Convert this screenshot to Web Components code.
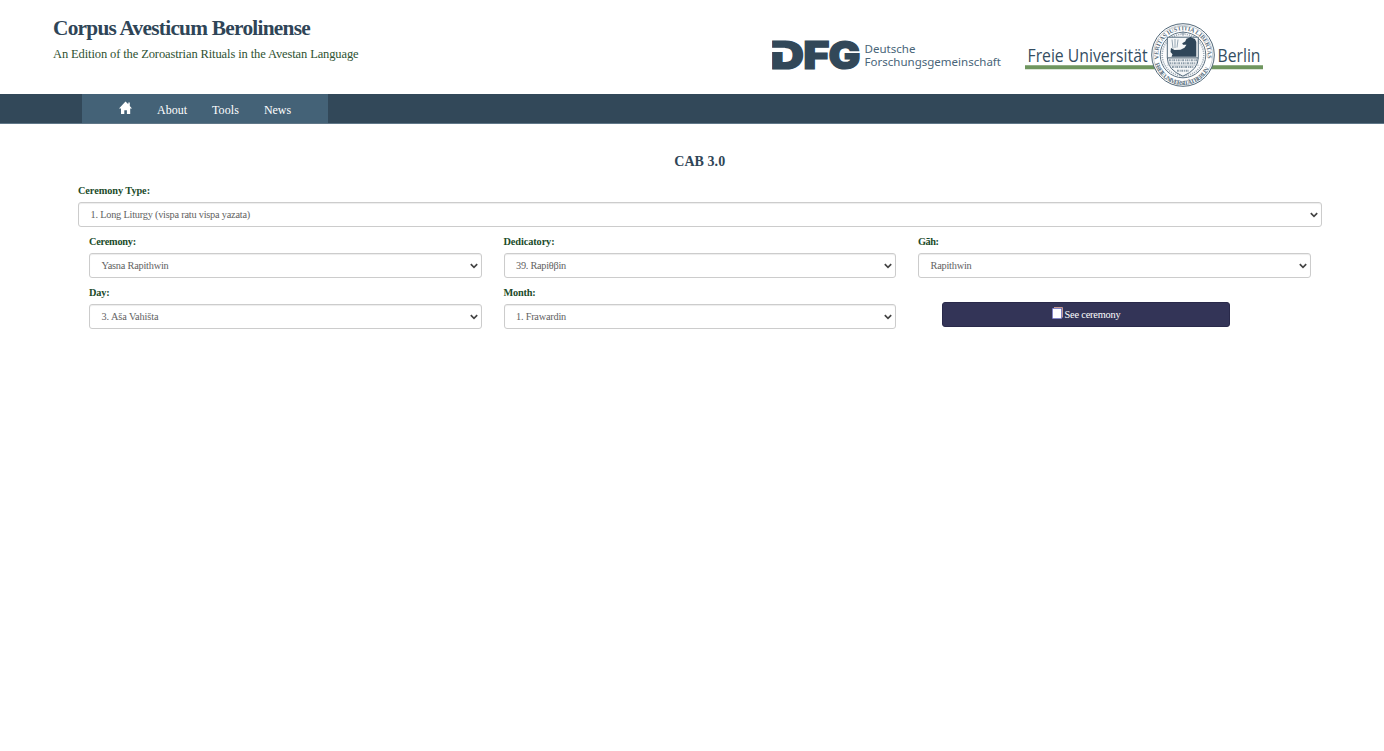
<!DOCTYPE html>
<html lang="en">
<head>
<meta charset="utf-8">
<title>Corpus Avesticum Berolinense</title>
<style>
html,body{margin:0;background:#fff}
body{font-family:"Liberation Serif",serif;color:#2f4557}
</style>
</head>
<body>
<cab-page></cab-page>
<script>
const define=(name,html,init)=>customElements.define(name,class extends HTMLElement{
  connectedCallback(){
    if(this.shadowRoot)return;
    const t=document.createElement('template');
    t.innerHTML=html;
    const root=this.attachShadow({mode:'open'});
    root.append(t.content.cloneNode(true));
    if(init)init(this,root);
  }
});

/* One line of text, tracked so that it fills the width given in pixels. */
define('cab-text',`<style>:host{display:inline-block;white-space:nowrap}span{display:inline-block}</style><span><slot></slot></span>`,(el,root)=>{
  const s=root.querySelector('span'),w=+el.getAttribute('w'),n=el.textContent.length;
  const d=w-s.getBoundingClientRect().width;
  s.style.letterSpacing=(d/n)+'px';
});

define('dfg-logo',`<style>:host{display:block;width:232px;height:54px}svg{display:block}</style>
<svg width="232" height="54" viewBox="0 -12 232 54">
<g font-family="Inter" font-weight="900" font-size="38.500" fill="#324859" stroke="#324859" stroke-width="1.200"><text x="-1.500" y="29.300" textLength="33.500" lengthAdjust="spacingAndGlyphs">D</text><text x="31.300" y="29.300" textLength="26.200" lengthAdjust="spacingAndGlyphs">F</text><text x="56.500" y="29.300" textLength="32" lengthAdjust="spacingAndGlyphs">G</text></g>
<path d="M0 7.800h13v4.200H0z" fill="#fff"/>
<g font-family="Noto Sans" font-size="11.300" fill="#496579"><text x="92.500" y="12.500" textLength="51" lengthAdjust="spacingAndGlyphs">Deutsche</text>
<text x="92.500" y="25.500" textLength="136.500" lengthAdjust="spacingAndGlyphs">Forschungsgemeinschaft</text></g>
</svg>`);

define('fu-logo',`<style>:host{display:block;width:240px;height:66px}svg{display:block}</style>
<svg width="240" height="66" viewBox="0 0 240 66">
<path d="M1 43.200h238v4H1z" fill="#6f965f"/>
<g font-family="Open Sans" font-size="17.500" fill="#344d61"><text x="3.500" y="39.800" textLength="120" lengthAdjust="spacingAndGlyphs">Freie Universität</text>
<text x="193.500" y="39.800" textLength="43" lengthAdjust="spacingAndGlyphs">Berlin</text></g>
<circle cx="159" cy="33" r="31.300" fill="#fff" stroke="#526879" stroke-width="1"/>
<circle cx="159" cy="33" r="29.600" fill="none" stroke="#a3afb8" stroke-width=".6"/>
<circle cx="159" cy="33" r="22.800" fill="#fafbfc" stroke="#5f7383" stroke-width="1"/>
<circle cx="159" cy="33" r="20.800" fill="none" stroke="#a1aeb9" stroke-width="1.600" stroke-dasharray="1.200 1"/>
<path id="up" d="M134.800 37.300A24.600 24.600 0 1 1 183.200 37.300" fill="none"/>
<path id="dn" d="M131 41.500A29 29 0 0 0 187 41.500" fill="none"/>
<g font-family="Liberation Serif" font-weight="700" font-size="6.200" fill="#5b7080"><text><textPath href="#up" textLength="85">VERITAS IUSTITIA LIBERTAS</textPath></text>
<text><textPath href="#dn" textLength="70">FREIE UNIVERSITÄT BERLIN</textPath></text></g>
<path d="M143.300 15.200h31v20.500q0 12-15.400 18.500-15.600-6.500-15.600-18.500z" fill="#f5f7f8" stroke="#52697b" stroke-width="1"/>
<path d="M159 9v5M157 11h4" stroke="#8193a1" stroke-width=".8"/>
<path d="M147 26l3.500 2 6-.2 4-2 2-3-3.500 0-.8-1.500 3-1.800 1.300-2.700 2.800-1 1-1 1.500 1 3.200 1.200 1.300 3V34.800H147.500l1-2.500-2-2.300z" fill="#2f4659"/>
<path d="M148 17.500l1 9M151 17v9M154 17.500l-1 8" stroke="#8c9dab" stroke-width=".9"/>
<path d="M143.300 35.900h31" stroke="#40576a" stroke-width="1"/>
<path d="M145 38.300h28M145.500 41.300h27M148 45h22M153 48.800h12" stroke="#8a9aa7" stroke-width="2" stroke-dasharray="1.800 .9 1 .7"/>
<path d="M143 43.200h32" stroke="#a7b3bd" stroke-width=".7"/>
</svg>`);

define('cab-header',`<style>
:host{display:flex;height:94px;box-sizing:border-box;padding-left:53px;align-items:flex-start}
.brand{width:719px;padding-top:15px}
h1{font-size:21.300px;line-height:26px;margin:0;color:#2f4557}
p{font-size:12.500px;line-height:16px;margin:5px 0 0;color:#2e5232}
dfg-logo{margin-top:28px}
fu-logo{margin:22px 0 0 20px}
</style>
<div class="brand"><h1><cab-text w="257">Corpus Avesticum Berolinense</cab-text></h1>
<p><cab-text w="305.500">An Edition of the Zoroastrian Rituals in the Avestan Language</cab-text></p></div>
<dfg-logo></dfg-logo><fu-logo></fu-logo>`);

define('cab-nav',`<style>
:host{display:block;height:30px;box-sizing:border-box;background:#324859;padding-left:82px;border-bottom:1px solid #607788}
nav{display:flex;width:246px;height:29px;background:#446277;box-sizing:border-box;padding-left:37px;color:#fff;font-size:12px;line-height:32px}
svg{margin:7px 25px 0 0;flex:none}
cab-text{margin-right:25px}
</style><nav><svg width="13" height="14" viewBox="0 0 13 14"><path fill="#fff" d="M6.500.5 9.300 3.200V1.500h1.500v3.500L13 7.500h-1.800V13H7.900V9.300H5.300V13H2V7.500H0z"/></svg>
<cab-text w="30">About</cab-text><cab-text w="27">Tools</cab-text><cab-text w="27">News</cab-text></nav>`);

define('cab-field',`<style>
:host{display:block;min-width:0}
label{display:block;height:18px;line-height:14px;font-size:10.300px;font-weight:700;color:#204b2a}
.box{height:25px;box-sizing:border-box;border:1px solid #ccc;border-radius:3px;box-shadow:inset 0 1px 1px #00000013;display:flex;align-items:center;justify-content:space-between;padding:0 3px 0 11.500px;font-size:10.300px;line-height:22px;color:#626262;background:#fff}
</style><label></label><div class="box"><slot></slot><svg width="8" height="6" viewBox="0 0 8 6"><path d="M.8 1.200 4 4.300 7.200 1.200" fill="none" stroke="#444" stroke-width="1.700"/></svg></div>`,(el,root)=>{
  const t=document.createElement('cab-text');
  t.setAttribute('w',el.getAttribute('lw'));
  t.textContent=el.getAttribute('label');
  root.querySelector('label').append(t);
});

define('cab-button',`<style>
:host{display:flex;height:25px;width:288px;box-sizing:border-box;border:1px solid #29294a;border-radius:3px;background:#333457;color:#fff;font-size:10.300px;line-height:23px;justify-content:center}
svg{margin:4px 1px 0 0}
</style><svg width="12" height="12" viewBox="0 0 12 12"><path d="M2 .5h8.500v10" fill="none" stroke="#c79a92"/><path d="M.5 1.500h9v10h-9z" fill="#fff" stroke="#6e6ee0" stroke-width=".5"/></svg><slot></slot>`);

define('cab-form',`<style>
:host{display:block;padding:28px 62.500px 0 78px}
h2{margin:0;text-align:center;font-size:14px;line-height:20px;color:#2f4557}
.type{margin-top:12px}
.grid{display:grid;grid-template-columns:repeat(3,1fr);column-gap:22px;row-gap:8px;padding:0 11px;margin-top:8px}
.action{padding:15.500px 0 0 24px;height:27px}
</style>
<h2><cab-text w="51">CAB 3.0</cab-text></h2>
<cab-field class="type" label="Ceremony Type:" lw="72"><cab-text w="159.500">1. Long Liturgy (vispa ratu vispa yazata)</cab-text></cab-field>
<div class="grid">
<cab-field label="Ceremony:" lw="47"><cab-text w="67">Yasna Rapithwin</cab-text></cab-field>
<cab-field label="Dedicatory:" lw="51"><cab-text w="50">39. Rapiθβin</cab-text></cab-field>
<cab-field label="Gāh:" lw="20.500"><cab-text w="41">Rapithwin</cab-text></cab-field>
<cab-field label="Day:" lw="20.500"><cab-text w="57">3. Aša Vahišta</cab-text></cab-field>
<cab-field label="Month:" lw="32"><cab-text w="50">1. Frawardin</cab-text></cab-field>
<div class="action"><cab-button><cab-text w="56">See ceremony</cab-text></cab-button></div>
</div>`);

define('cab-page',`<style>:host{display:block;height:751px;overflow:hidden;background:#fff}</style>
<cab-header></cab-header><cab-nav></cab-nav><cab-form></cab-form>`);
</script>
</body>
</html>
